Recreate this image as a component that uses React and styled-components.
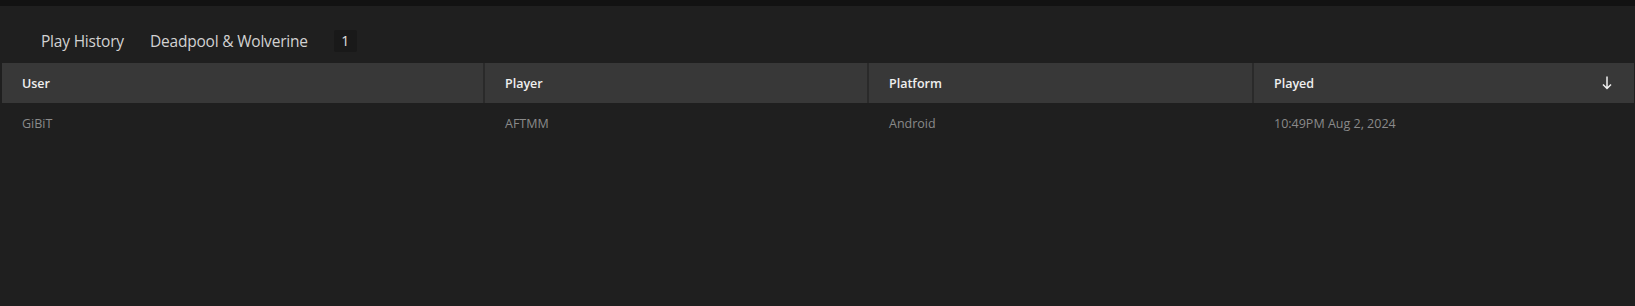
import React from 'react'
import styled, { createGlobalStyle } from 'styled-components';

const GlobalStyle = createGlobalStyle`
  html, body {
    margin: 0;
    padding: 0;
    background-color: #1f1f1f;
  }
  body {
    font-family: "Open Sans", "Noto Sans", sans-serif;
  }
`;

const Page = styled.div`
  width: 100%;
  min-height: 306px;
  background-color: #1f1f1f;
`;

const TopStrip = styled.div`
  height: 6px;
  background-color: #121212;
`;

const TitleBar = styled.div`
  height: 45px;
  padding-top: 12px;
  display: flex;
  align-items: center;
  padding-left: 41px;
  gap: 26px;
`;

const Title = styled.span`
  font-size: 15.5px;
  color: #d2d2d2;
  letter-spacing: -0.2px;
`;

const Badge = styled.span`
  width: 23px;
  height: 22px;
  display: flex;
  align-items: center;
  justify-content: center;
  background-color: #191919;
  color: #e0e0e0;
  font-size: 14px;
  border-radius: 2px;
`;

const Table = styled.div`
  margin: 0 1px 0 2px;
`;

const Row = styled.div`
  display: grid;
  grid-template-columns: 481px 384px 385px 1fr;
  height: 40px;
  background-color: ${p => p.$head ? '#383838' : 'transparent'};
`;

const HeadCell = styled.div`
  display: flex;
  align-items: center;
  justify-content: space-between;
  padding: 0 ${p => p.$sorted ? '22px' : '20px'} 0 20px;
  font-size: 12.5px;
  font-weight: 600;
  color: #efefef;
  border-left: ${p => p.$first ? 'none' : '2px solid #2a2a2a'};
`;

const Cell = styled.div`
  display: flex;
  align-items: center;
  padding: 0 20px;
  font-size: 12.5px;
  color: #8a8a8a;
  border-left: ${p => p.$first ? 'none' : '2px solid transparent'};
`;

const SortArrow = () => (
  <svg width="10" height="14" viewBox="0 0 10 14" fill="none">
    <path d="M5 0.5V12.5M1 8.5L5 12.5L9 8.5" stroke="#f0f0f0" strokeWidth="1.5" />
  </svg>
);

const columns = ['User', 'Player', 'Platform', 'Played'];
const rows = [['GiBiT', 'AFTMM', 'Android', '10:49PM Aug 2, 2024']];

const App = () => {
  return (
    <Page>
      <GlobalStyle />
      <TopStrip />
      <TitleBar>
        <Title>Play History</Title>
        <Title>Deadpool &amp; Wolverine</Title>
        <Badge>1</Badge>
      </TitleBar>
      <Table>
        <Row $head>
          {columns.map((c, i) => (
            <HeadCell key={c} $first={i === 0} $sorted={c === 'Played'}>
              <span>{c}</span>
              {c === 'Played' && <SortArrow />}
            </HeadCell>
          ))}
        </Row>
        {rows.map((r, ri) => (
          <Row key={ri}>
            {r.map((v, i) => (
              <Cell key={i} $first={i === 0}>{v}</Cell>
            ))}
          </Row>
        ))}
      </Table>
    </Page>
  )
}

export default App
